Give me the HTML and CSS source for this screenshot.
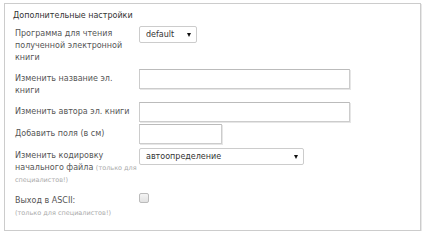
FILE: index.html
```html
<!DOCTYPE html>
<html lang="ru">
  <head>
    <meta charset="UTF-8" />
    <meta name="viewport" content="width=device-width, initial-scale=1.0" />
    <title>Дополнительные настройки</title>
    <link rel="stylesheet" href="styles.css">
  </head>
  <body>
    <div class="settings-panel">
      <div class="panel-title">Дополнительные настройки</div>

      <div class="form-row">
        <label class="row-label" for="reader">Программа для чтения полученной электронной книги</label>
        <div class="select-wrap select-short">
          <select id="reader">
            <option>default</option>
          </select>
        </div>
      </div>

      <div class="form-row">
        <label class="row-label" for="title">Изменить название эл. книги</label>
        <input class="text-input input-wide" type="text" id="title" />
      </div>

      <div class="form-row">
        <label class="row-label" for="author">Изменить автора эл. книги</label>
        <input class="text-input input-wide" type="text" id="author" />
      </div>

      <div class="form-row">
        <label class="row-label" for="margins">Добавить поля (в см)</label>
        <input class="text-input input-short" type="text" id="margins" />
      </div>

      <div class="form-row">
        <label class="row-label" for="encoding">Изменить кодировку<br>начального файла <span class="hint">(только для</span><br><span class="hint">специалистов!)</span></label>
        <div class="select-wrap select-long">
          <select id="encoding">
            <option>автоопределение</option>
          </select>
        </div>
      </div>

      <div class="form-row">
        <label class="row-label" for="ascii">Выход в ASCII:<span class="hint hint-block">(только для специалистов!)</span></label>
        <input class="check" type="checkbox" id="ascii" />
      </div>
    </div>
  </body>
</html>
```

FILE: styles.css
```css
body {
  font-family: "DejaVu Sans", Verdana, sans-serif;
  font-size: 8px;
  background-color: #ffffff;
  margin: 0;
}
.settings-panel {
  margin: 3px 3px 0 4px;
  padding: 6px 8px 8px 8px;
  border: 1px solid #cccccc;
  box-shadow: 1px 1px 0 #e8e8e8;
}
.panel-title {
  color: #333;
  line-height: 12px;
  margin-bottom: 2px;
}
.form-row {
  display: grid;
  grid-template-columns: 126px 1fr;
  align-items: start;
  margin-bottom: 2px;
}
.form-row:last-child {
  margin-bottom: 0;
}
.row-label {
  color: #555;
  line-height: 12px;
  padding: 4px 0 3px 2px;
}
.hint {
  color: #aaa;
  font-size: 6.5px;
  line-height: 10px;
}
.hint-block {
  display: block;
  line-height: 12px;
}
.text-input {
  height: 20px;
  box-sizing: border-box;
  border: 1px solid #cccccc;
  border-top-color: #bbbbbb;
  box-shadow: 1px 1px 0 #e6e6e6;
  background: #fff;
  margin: 0;
  padding: 0 4px;
  font: inherit;
}
.input-wide {
  width: 211px;
}
.input-short {
  width: 83px;
}
.select-wrap {
  position: relative;
  margin-top: 2px;
}
.select-wrap::after {
  content: "";
  position: absolute;
  top: 7px;
  right: 6px;
  border-left: 2.5px solid transparent;
  border-right: 2.5px solid transparent;
  border-top: 4px solid #111;
  pointer-events: none;
}
.select-short {
  width: 58px;
}
.select-long {
  width: 165px;
}
.select-wrap select {
  appearance: none;
  -webkit-appearance: none;
  width: 100%;
  height: 17px;
  box-sizing: border-box;
  border: 1px solid #cccccc;
  border-radius: 2px;
  background: #fff;
  color: #333;
  font: inherit;
  padding: 0 14px 0 6px;
  margin: 0;
}
.check {
  appearance: none;
  -webkit-appearance: none;
  width: 10px;
  height: 10px;
  margin: 2px 0 0 0;
  border: 1px solid #bbbbbb;
  border-radius: 2px;
  background: linear-gradient(#f4f4f4, #e2e2e2);
}
```
